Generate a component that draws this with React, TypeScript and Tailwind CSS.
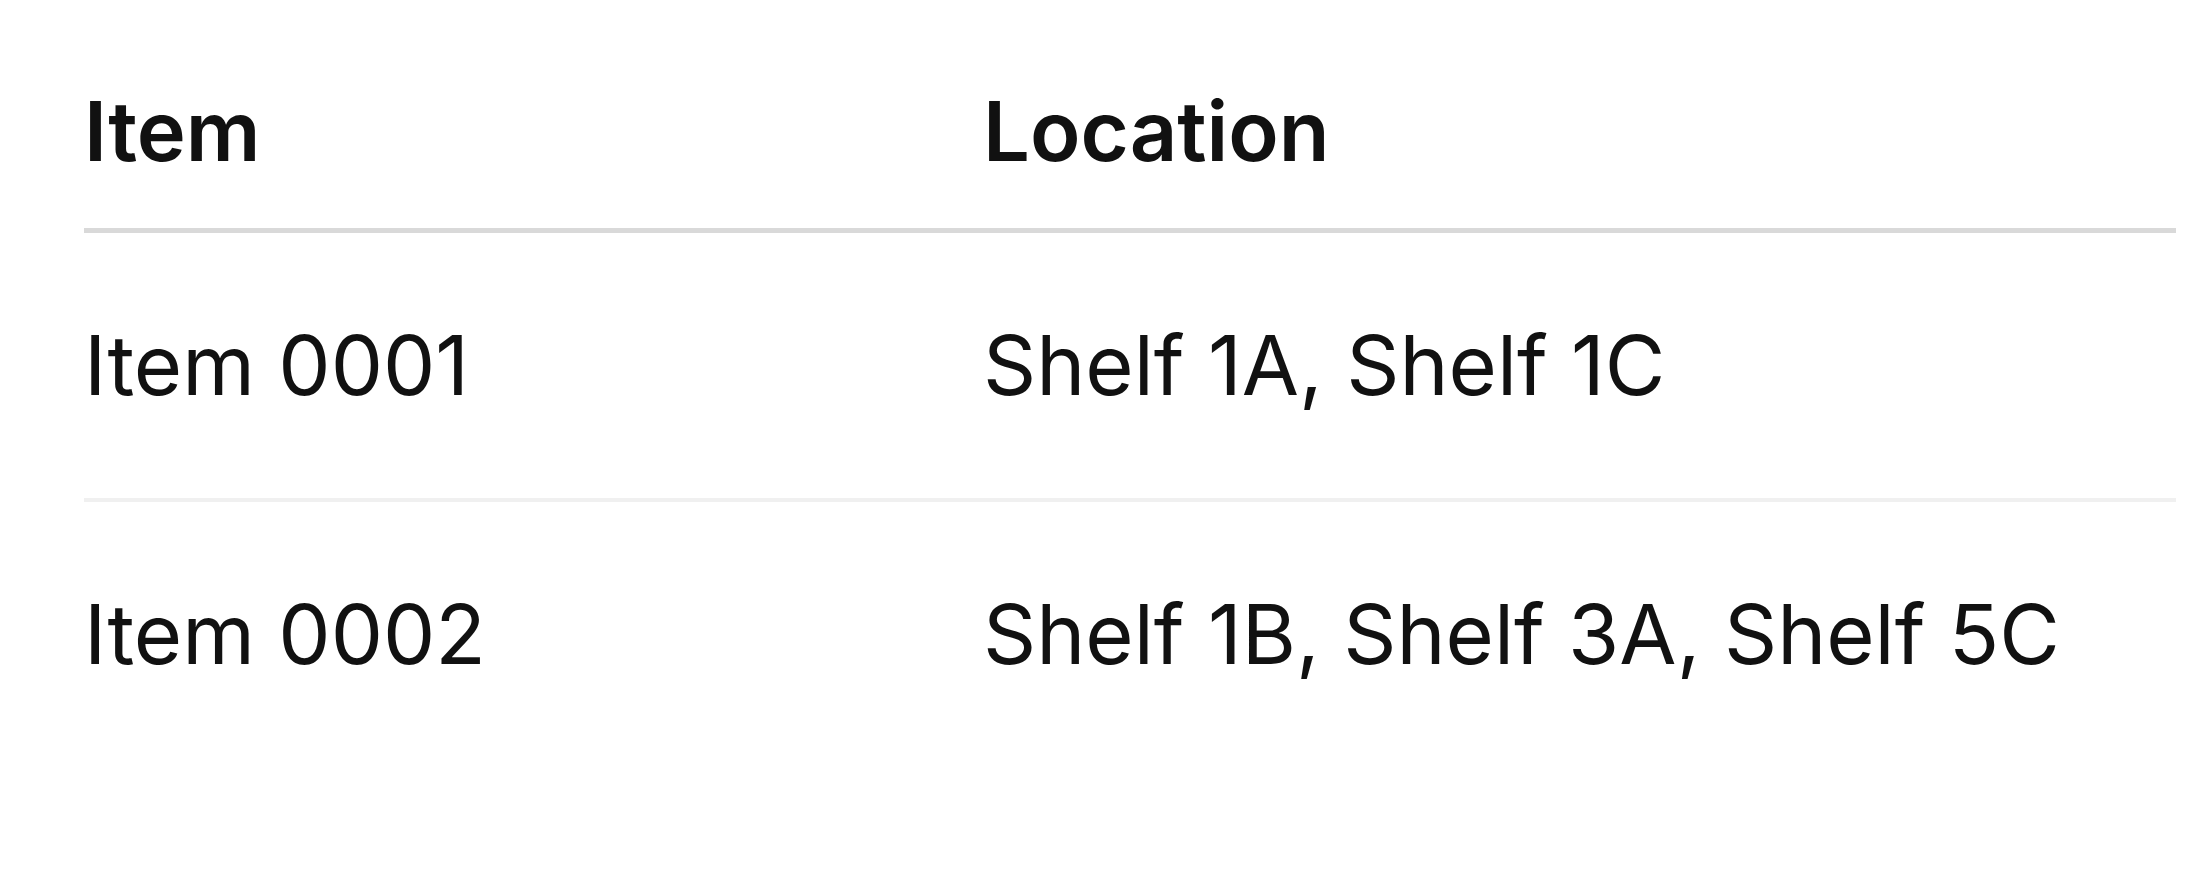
const rows = [
  { item: "Item 0001", location: "Shelf 1A, Shelf 1C" },
  { item: "Item 0002", location: "Shelf 1B, Shelf 3A, Shelf 5C" },
];

export default function App() {
  return (
    <div className="min-h-screen bg-white pl-[84px] pr-[28px] pt-[90px] font-['Inter',sans-serif] text-[#111111]">
      {/* Header row */}
      <div className="grid grid-cols-[823px_1fr] border-b-[5px] border-[#d9d9d9] text-[83px] font-semibold leading-none">
        <div className="pb-[55px]">Item</div>
        <div className="pb-[55px] pl-[76px]">Location</div>
      </div>

      {/* Body rows */}
      {rows.map((row, i) => (
        <div
          key={row.item}
          className={`grid grid-cols-[823px_1fr] text-[83px] leading-none ${
            i < rows.length - 1 ? "border-b-4 border-[#f0f0f0]" : ""
          }`}
        >
          <div className="pt-[91px] pb-[91px]">{row.item}</div>
          <div className="pt-[91px] pb-[91px] pl-[76px]">{row.location}</div>
        </div>
      ))}
    </div>
  );
}
